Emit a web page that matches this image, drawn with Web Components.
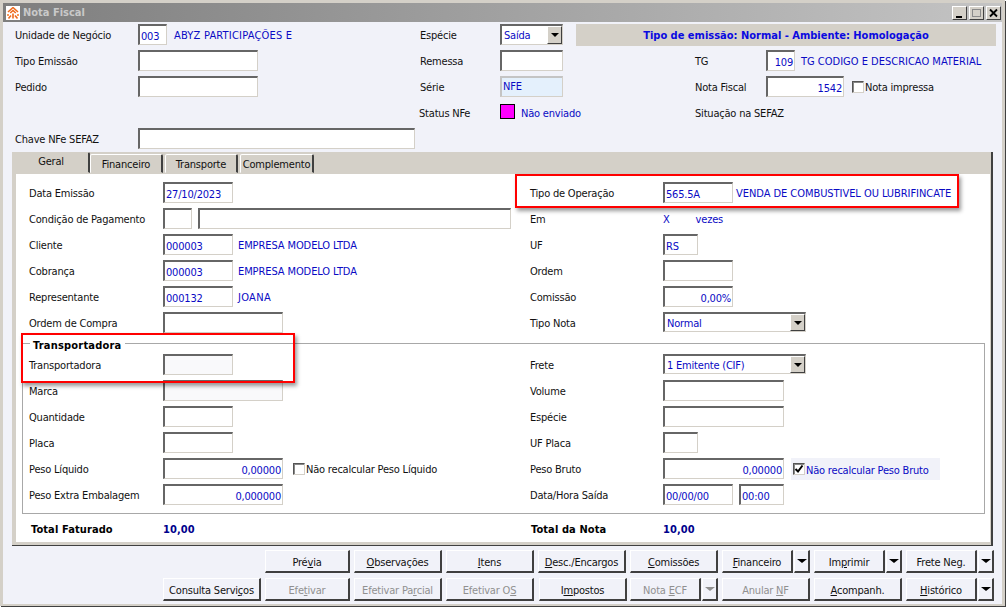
<!DOCTYPE html>
<html lang="pt-BR"><head><meta charset="utf-8"><title>Nota Fiscal</title>
<style>
html,body{margin:0;padding:0;background:#fff;width:1006px;height:609px;overflow:hidden}
body{font:11px "DejaVu Sans Condensed","DejaVu Sans",sans-serif;font-stretch:condensed;letter-spacing:-.2px;color:#111;position:relative}
</style></head><body>
<nf-window caption="Nota Fiscal">
  <nf-grid cols="123px 282px 80px 195px 71px 1fr" style="padding:2px 0 0 12px">
    <nf-text>Unidade de Negócio</nf-text>
    <nf-cell gap="7"><nf-input w="29" val>003</nf-input><nf-text blue style="letter-spacing:.2px">ABYZ PARTICIPAÇÕES E</nf-text></nf-cell>
    <nf-text>Espécie</nf-text>
    <nf-cell span="4 / -1" gap="13"><nf-combo w="63" h="21">Saída</nf-combo><nf-banner>Tipo de emissão: Normal - Ambiente: Homologação</nf-banner></nf-cell>

    <nf-text>Tipo Emissão</nf-text><nf-cell><nf-input w="120"></nf-input></nf-cell>
    <nf-text>Remessa</nf-text><nf-cell><nf-input w="63"></nf-input></nf-cell>
    <nf-text>TG</nf-text>
    <nf-cell gap="6"><nf-input w="29" right>109</nf-input><nf-text blue style="letter-spacing:0">TG CODIGO E DESCRICAO MATERIAL</nf-text></nf-cell>

    <nf-text>Pedido</nf-text><nf-cell><nf-input w="120"></nf-input></nf-cell>
    <nf-text>Série</nf-text><nf-cell><nf-input w="63" tint>NFE</nf-input></nf-cell>
    <nf-text>Nota Fiscal</nf-text>
    <nf-cell gap="8"><nf-input w="78" right>1542</nf-input><nf-check>Nota impressa</nf-check></nf-cell>

    <nf-cell></nf-cell><nf-cell></nf-cell>
    <nf-text style="margin-left:-1px">Status NFe</nf-text>
    <nf-cell gap="6"><nf-swatch></nf-swatch><nf-text blue>Não enviado</nf-text></nf-cell>
    <nf-text>Situação na SEFAZ</nf-text><nf-cell></nf-cell>

    <nf-text>Chave NFe SEFAZ</nf-text><nf-cell span="2 / -1"><nf-input w="277"></nf-input></nf-cell>
  </nf-grid>

  <nf-tabs>
    <nf-tab slot="tabs" active w="77">Geral</nf-tab>
    <nf-tab slot="tabs" w="73">Financeiro</nf-tab>
    <nf-tab slot="tabs" w="73">Transporte</nf-tab>
    <nf-tab slot="tabs" w="74">Complemento</nf-tab>

    <nf-grid cols="134px 367px 133px 1fr" style="padding-left:13px">
      <nf-text>Data Emissão</nf-text><nf-cell><nf-input w="70">27/10/2023</nf-input></nf-cell>
      <nf-text>Tipo de Operação</nf-text>
      <nf-cell gap="3"><nf-input w="70">565.5A</nf-input><nf-text blue style="letter-spacing:-.05px">VENDA DE COMBUSTIVEL OU LUBRIFINCATE</nf-text></nf-cell>

      <nf-text>Condição de Pagamento</nf-text><nf-cell gap="6"><nf-input w="29"></nf-input><nf-input w="313"></nf-input></nf-cell>
      <nf-text>Em</nf-text><nf-cell gap="26"><nf-text blue>X</nf-text><nf-text blue>vezes</nf-text></nf-cell>

      <nf-text>Cliente</nf-text><nf-cell gap="5"><nf-input w="70">000003</nf-input><nf-text blue style="letter-spacing:-.1px">EMPRESA MODELO LTDA</nf-text></nf-cell>
      <nf-text>UF</nf-text><nf-cell><nf-input w="35">RS</nf-input></nf-cell>

      <nf-text>Cobrança</nf-text><nf-cell gap="5"><nf-input w="70">000003</nf-input><nf-text blue style="letter-spacing:-.1px">EMPRESA MODELO LTDA</nf-text></nf-cell>
      <nf-text>Ordem</nf-text><nf-cell><nf-input w="70"></nf-input></nf-cell>

      <nf-text>Representante</nf-text><nf-cell gap="5"><nf-input w="70">000132</nf-input><nf-text blue style="letter-spacing:.3px">JOANA</nf-text></nf-cell>
      <nf-text>Comissão</nf-text><nf-cell><nf-input w="70" right>0,00%</nf-input></nf-cell>

      <nf-text>Ordem de Compra</nf-text><nf-cell><nf-input w="120"></nf-input></nf-cell>
      <nf-text>Tipo Nota</nf-text><nf-cell><nf-combo w="143" h="20">Normal</nf-combo></nf-cell>
    </nf-grid>

    <nf-group legend="Transportadora">
      <nf-grid cols="134px 367px 133px 1fr" style="padding-left:6px">
        <nf-text>Transportadora</nf-text><nf-cell><nf-input w="70" dim></nf-input></nf-cell>
        <nf-text>Frete</nf-text><nf-cell><nf-combo w="143" h="20">1 Emitente (CIF)</nf-combo></nf-cell>

        <nf-text>Marca</nf-text><nf-cell><nf-input w="120" dim></nf-input></nf-cell>
        <nf-text>Volume</nf-text><nf-cell><nf-input w="121"></nf-input></nf-cell>

        <nf-text>Quantidade</nf-text><nf-cell><nf-input w="70"></nf-input></nf-cell>
        <nf-text>Espécie</nf-text><nf-cell><nf-input w="121"></nf-input></nf-cell>

        <nf-text>Placa</nf-text><nf-cell><nf-input w="70"></nf-input></nf-cell>
        <nf-text>UF Placa</nf-text><nf-cell><nf-input w="35"></nf-input></nf-cell>

        <nf-text>Peso Líquido</nf-text><nf-cell gap="10"><nf-input w="120" right>0,00000</nf-input><nf-check>Não recalcular Peso Líquido</nf-check></nf-cell>
        <nf-text>Peso Bruto</nf-text><nf-cell gap="7"><nf-input w="121" right>0,00000</nf-input><nf-check checked panel>Não recalcular Peso Bruto</nf-check></nf-cell>

        <nf-text>Peso Extra Embalagem</nf-text><nf-cell><nf-input w="120" right>0,000000</nf-input></nf-cell>
        <nf-text>Data/Hora Saída</nf-text><nf-cell gap="6"><nf-input w="70">00/00/00</nf-input><nf-input w="45">00:00</nf-input></nf-cell>
      </nf-grid>
    </nf-group>

    <nf-grid cols="134px 367px 133px 1fr" style="padding:4px 0 3px 15px">
      <nf-text bold>Total Faturado</nf-text><nf-text bold navy style="margin-left:-2px">10,00</nf-text>
      <nf-text bold style="margin-left:-1px">Total da Nota</nf-text><nf-text bold navy style="margin-left:-2px">10,00</nf-text>
    </nf-grid>
  </nf-tabs>

  <nf-toolbar>
    <nf-btn w="85">Pré<u>v</u>ia</nf-btn>
    <nf-btn w="88"><u>O</u>bservações</nf-btn>
    <nf-btn w="88"><u>I</u>tens</nf-btn>
    <nf-btn w="88"><u>D</u>esc./Encargos</nf-btn>
    <nf-btn w="88"><u>C</u>omissões</nf-btn>
    <nf-btn w="71" join><u>F</u>inanceiro</nf-btn><nf-btn w="16" arrow></nf-btn>
    <nf-btn w="71" join>Im<u>p</u>rimir</nf-btn><nf-btn w="16" arrow></nf-btn>
    <nf-btn w="71" join>Frete Ne<u>g</u>.</nf-btn><nf-btn w="16" arrow></nf-btn>
  </nf-toolbar>
  <nf-toolbar style="margin-top:5px">
    <nf-btn w="98">Consulta Servi<u>ç</u>os</nf-btn>
    <nf-btn w="85" off>Efe<u>t</u>ivar</nf-btn>
    <nf-btn w="88" off>Efetivar Pa<u>r</u>cial</nf-btn>
    <nf-btn w="88" off>Efetivar O<u>S</u></nf-btn>
    <nf-btn w="88" style="margin:0 -1px 0 1px">I<u>m</u>postos</nf-btn>
    <nf-btn w="71" off join>Nota <u>E</u>CF</nf-btn><nf-btn w="16" arrow off></nf-btn>
    <nf-btn w="88" off>Anular <u>N</u>F</nf-btn>
    <nf-btn w="88"><u>A</u>companh.</nf-btn>
    <nf-btn w="71" join><u>H</u>istórico</nf-btn><nf-btn w="16" arrow></nf-btn>
  </nf-toolbar>
</nf-window>
<nf-callout x="515" y="174" w="444" h="34"></nf-callout>
<nf-callout x="21" y="333" w="274" h="50"></nf-callout>
<script>
const def=(name,css,html,setup)=>customElements.define(name,class extends HTMLElement{
  connectedCallback(){
    if(this.shadowRoot)return;
    const r=this.attachShadow({mode:'open'});
    r.innerHTML='<style>'+css+'</style>'+(typeof html==='function'?html(this):html);
    if(setup)setup(this,r);
  }
});
const px=(h,a)=>h.getAttribute(a)+'px';
def('nf-window',`
  :host{display:flex;flex-direction:column;box-sizing:border-box;width:1005px;height:606px;background:#f1f2f9;
    border-top:3px solid #d4d0c8;border-left:3px solid #d4d0c8;border-right:3px solid #d4d0c8;border-bottom:2px solid #d4d0c8;
    box-shadow:1px 1px 0 #404040}
  .bar{flex:none;display:flex;align-items:center;height:19px;background:linear-gradient(90deg,#7e7e7e,#c4c4c4);color:#c9c9c9;font-weight:bold;letter-spacing:0;padding:0 1px 0 3px}
  .ico{width:14px;height:14px;background:#fff;margin-right:3px;display:block}
  .sp{flex:1}
  .wb{width:15px;height:14px;box-sizing:border-box;background:#d4d0c8;border:1px solid;border-color:#fff #404040 #404040 #fff;margin-left:1px;display:block}
  .wb+.wb{margin-left:2px}`,
  h=>`<div class="bar"><svg class="ico" viewBox="0 0 14 14"><g fill="none" stroke="#ee6a1c" stroke-width="1.6"><path d="M7 1.5 2 6M7 1.5 12 6"/><path d="M4.2 7 7 4.5 9.8 7"/><path d="M2.5 12.5 5 9.5M11.5 12.5 9 9.5M7 7.5v5"/></g><g fill="#f59a5c"><rect x="1" y="8" width="2" height="2"/><rect x="11" y="8" width="2" height="2"/></g></svg><span>${h.getAttribute('caption')}</span><span class="sp"></span>
  <svg class="wb" viewBox="0 0 13 12"><rect x="3" y="9" width="6" height="2" fill="#000"/></svg>
  <svg class="wb" viewBox="0 0 13 12"><rect x="2.5" y="2.5" width="8" height="7" fill="none" stroke="#8a8a8a"/><rect x="2" y="2" width="9" height="1" fill="#8a8a8a"/></svg>
  <svg class="wb" viewBox="0 0 13 12"><path d="M3 2.5 10 9.5M10 2.5 3 9.5" stroke="#000" stroke-width="1.8" fill="none"/></svg></div><slot></slot>`);
def('nf-grid',`:host{display:grid;grid-auto-rows:21px;row-gap:5px}`,`<slot></slot>`,
  h=>{h.style.gridTemplateColumns=h.getAttribute('cols')});
def('nf-cell',`:host{display:flex;align-items:flex-start;min-width:0}`,`<slot></slot>`,
  h=>{if(h.hasAttribute('gap'))h.style.gap=px(h,'gap');if(h.hasAttribute('span'))h.style.gridColumn=h.getAttribute('span')});
def('nf-text',`
  :host{display:block;line-height:23px;height:21px;white-space:nowrap;color:#111}
  :host([blue]){color:#0a0ac4}
  :host([bold]){font-weight:bold;color:#000;letter-spacing:.1px}
  :host([navy]){color:#00008c}`,`<slot></slot>`);
def('nf-input',`
  :host{display:block;flex:none;box-sizing:border-box;height:21px;line-height:22px;padding:0 1px;background:#fff;color:#0a0ac4;white-space:nowrap;overflow:hidden;
    border:2px solid;border-color:#666 #d4d0c8 #d4d0c8 #666;border-right-width:1px;border-bottom-width:1px}
  :host([right]){text-align:right}
  :host([tint]){background:#e4f0fc;border-color:#c4c4c4 #d4d0c8 #d4d0c8 #c4c4c4;line-height:17px}
  :host([dim]){background:#f9f9fb}`,`<slot></slot>`,h=>{h.style.width=px(h,'w')});
def('nf-combo',`
  :host{display:flex;flex:none;box-sizing:border-box;background:#fff;color:#0a0ac4;border:2px solid;border-color:#666 #d4d0c8 #d4d0c8 #666;border-right-width:1px;border-bottom-width:1px;line-height:20px;padding-left:2px}
  .t{flex:1;white-space:nowrap;overflow:hidden}
  .b{flex:none;width:15px;box-sizing:border-box;background:#d4d0c8;border:1px solid;border-color:#fff #404040 #404040 #fff;display:flex;align-items:center;justify-content:center}
  i{display:block;width:0;height:0;border:4px solid transparent;border-top:4px solid #000;border-bottom:0}`,
  `<span class="t"><slot></slot></span><span class="b"><i></i></span>`,
  h=>{h.style.width=px(h,'w');h.style.height=px(h,'h')});
def('nf-banner',`:host{display:block;flex:none;width:420px;height:22px;line-height:24px;background:#d4d0c8;color:#0a0ae0;font-weight:bold;letter-spacing:0;text-align:center;white-space:nowrap}`,`<slot></slot>`);
def('nf-swatch',`:host{display:block;flex:none;width:15px;height:15px;box-sizing:border-box;margin-top:2px;background:#ff00ff;border:1px solid #000}`,``);
def('nf-check',`
  :host{display:flex;align-items:center;height:21px;white-space:nowrap;color:#111;gap:1px}
  :host([panel]){box-sizing:border-box;width:149px;height:22px;background:#f1f2f9;padding:0 0 0 2px;color:#0a0ac4}
  span{padding-top:2px}
  .b{flex:none;width:12px;height:12px;box-sizing:border-box;background:#fff;border:1px solid;border-color:#555 #d4d0c8 #d4d0c8 #555;box-shadow:inset 1px 1px 0 #888;display:block}`,
  h=>`<svg class="b" viewBox="0 0 10 10">${h.hasAttribute('checked')?'<path d="M1.5 5 4 7.5 8.5 1.5" fill="none" stroke="#000" stroke-width="2"/>':''}</svg><span><slot></slot></span>`);
def('nf-tabs',`
  :host{display:block;box-sizing:border-box;width:981px;margin:3px 0 0 9px;background:#d4d0c8;border-bottom:1px solid #404040;border-right:2px solid #404040}
  .strip{display:flex;height:22px;padding-left:1px;align-items:flex-start}
  .strip ::slotted(nf-tab){margin-top:2px;margin-right:2px}
  .strip ::slotted(nf-tab[active]){margin-top:0;margin-right:0}
  .page{background:#fff;margin:0 1px 3px 4px;padding-top:8px}`,
  `<div class="strip"><slot name="tabs"></slot></div><div class="page"><slot></slot></div>`);
def('nf-tab',`
  :host{display:block;box-sizing:border-box;height:19px;line-height:19px;text-align:center;background:#d4d0c8;color:#111;border:1px solid;border-color:#fff #404040 transparent #fff;border-right-width:2px;border-radius:2px 2px 0 0;white-space:nowrap}
  :host([active]){height:21px;border-color:transparent #404040 transparent transparent;line-height:18px}`,`<slot></slot>`,
  h=>{h.style.width=px(h,'w')});
def('nf-group',`
  :host{display:block;margin:10px 5px 0 6px;border:1px solid #a8a8a8;padding-bottom:8px}
  .l{display:block;width:max-content;margin:-6px 0 2px 7px;padding:0 4px 0 3px;height:14px;line-height:16px;background:#fff;font-weight:bold;letter-spacing:.2px;color:#000}`,
  h=>`<span class="l">${h.getAttribute('legend')}</span><slot></slot>`);
def('nf-toolbar',`:host{display:flex;justify-content:flex-end;gap:4px;padding-right:8px;margin-top:4px}`,`<slot></slot>`);
def('nf-btn',`
  :host{display:flex;align-items:center;justify-content:center;flex:none;box-sizing:border-box;height:23px;background:#f1f2f9;color:#111;border:1px solid;border-color:#fff #404040 #404040 #fff;border-right-width:2px;border-bottom-width:2px;white-space:nowrap}
  :host([off]){color:#909090}
  :host([join]){margin-right:-3px}
  span{padding-top:2px}
  i{display:block;width:0;height:0;border:5px solid transparent;border-top:4px solid #000;border-bottom:0}
  :host([off]) i{border-top-color:#909090}`,
  h=>h.hasAttribute('arrow')?'<i></i>':'<span><slot></slot></span>',
  h=>{h.style.width=px(h,'w')});
def('nf-callout',`:host{position:absolute;display:block;box-sizing:border-box;border:2px solid #f00;box-shadow:2px 3px 4px rgba(0,0,0,.4);pointer-events:none}`,``,
  h=>{const s=h.style;s.left=px(h,'x');s.top=px(h,'y');s.width=px(h,'w');s.height=px(h,'h')});
</script>
</body></html>
